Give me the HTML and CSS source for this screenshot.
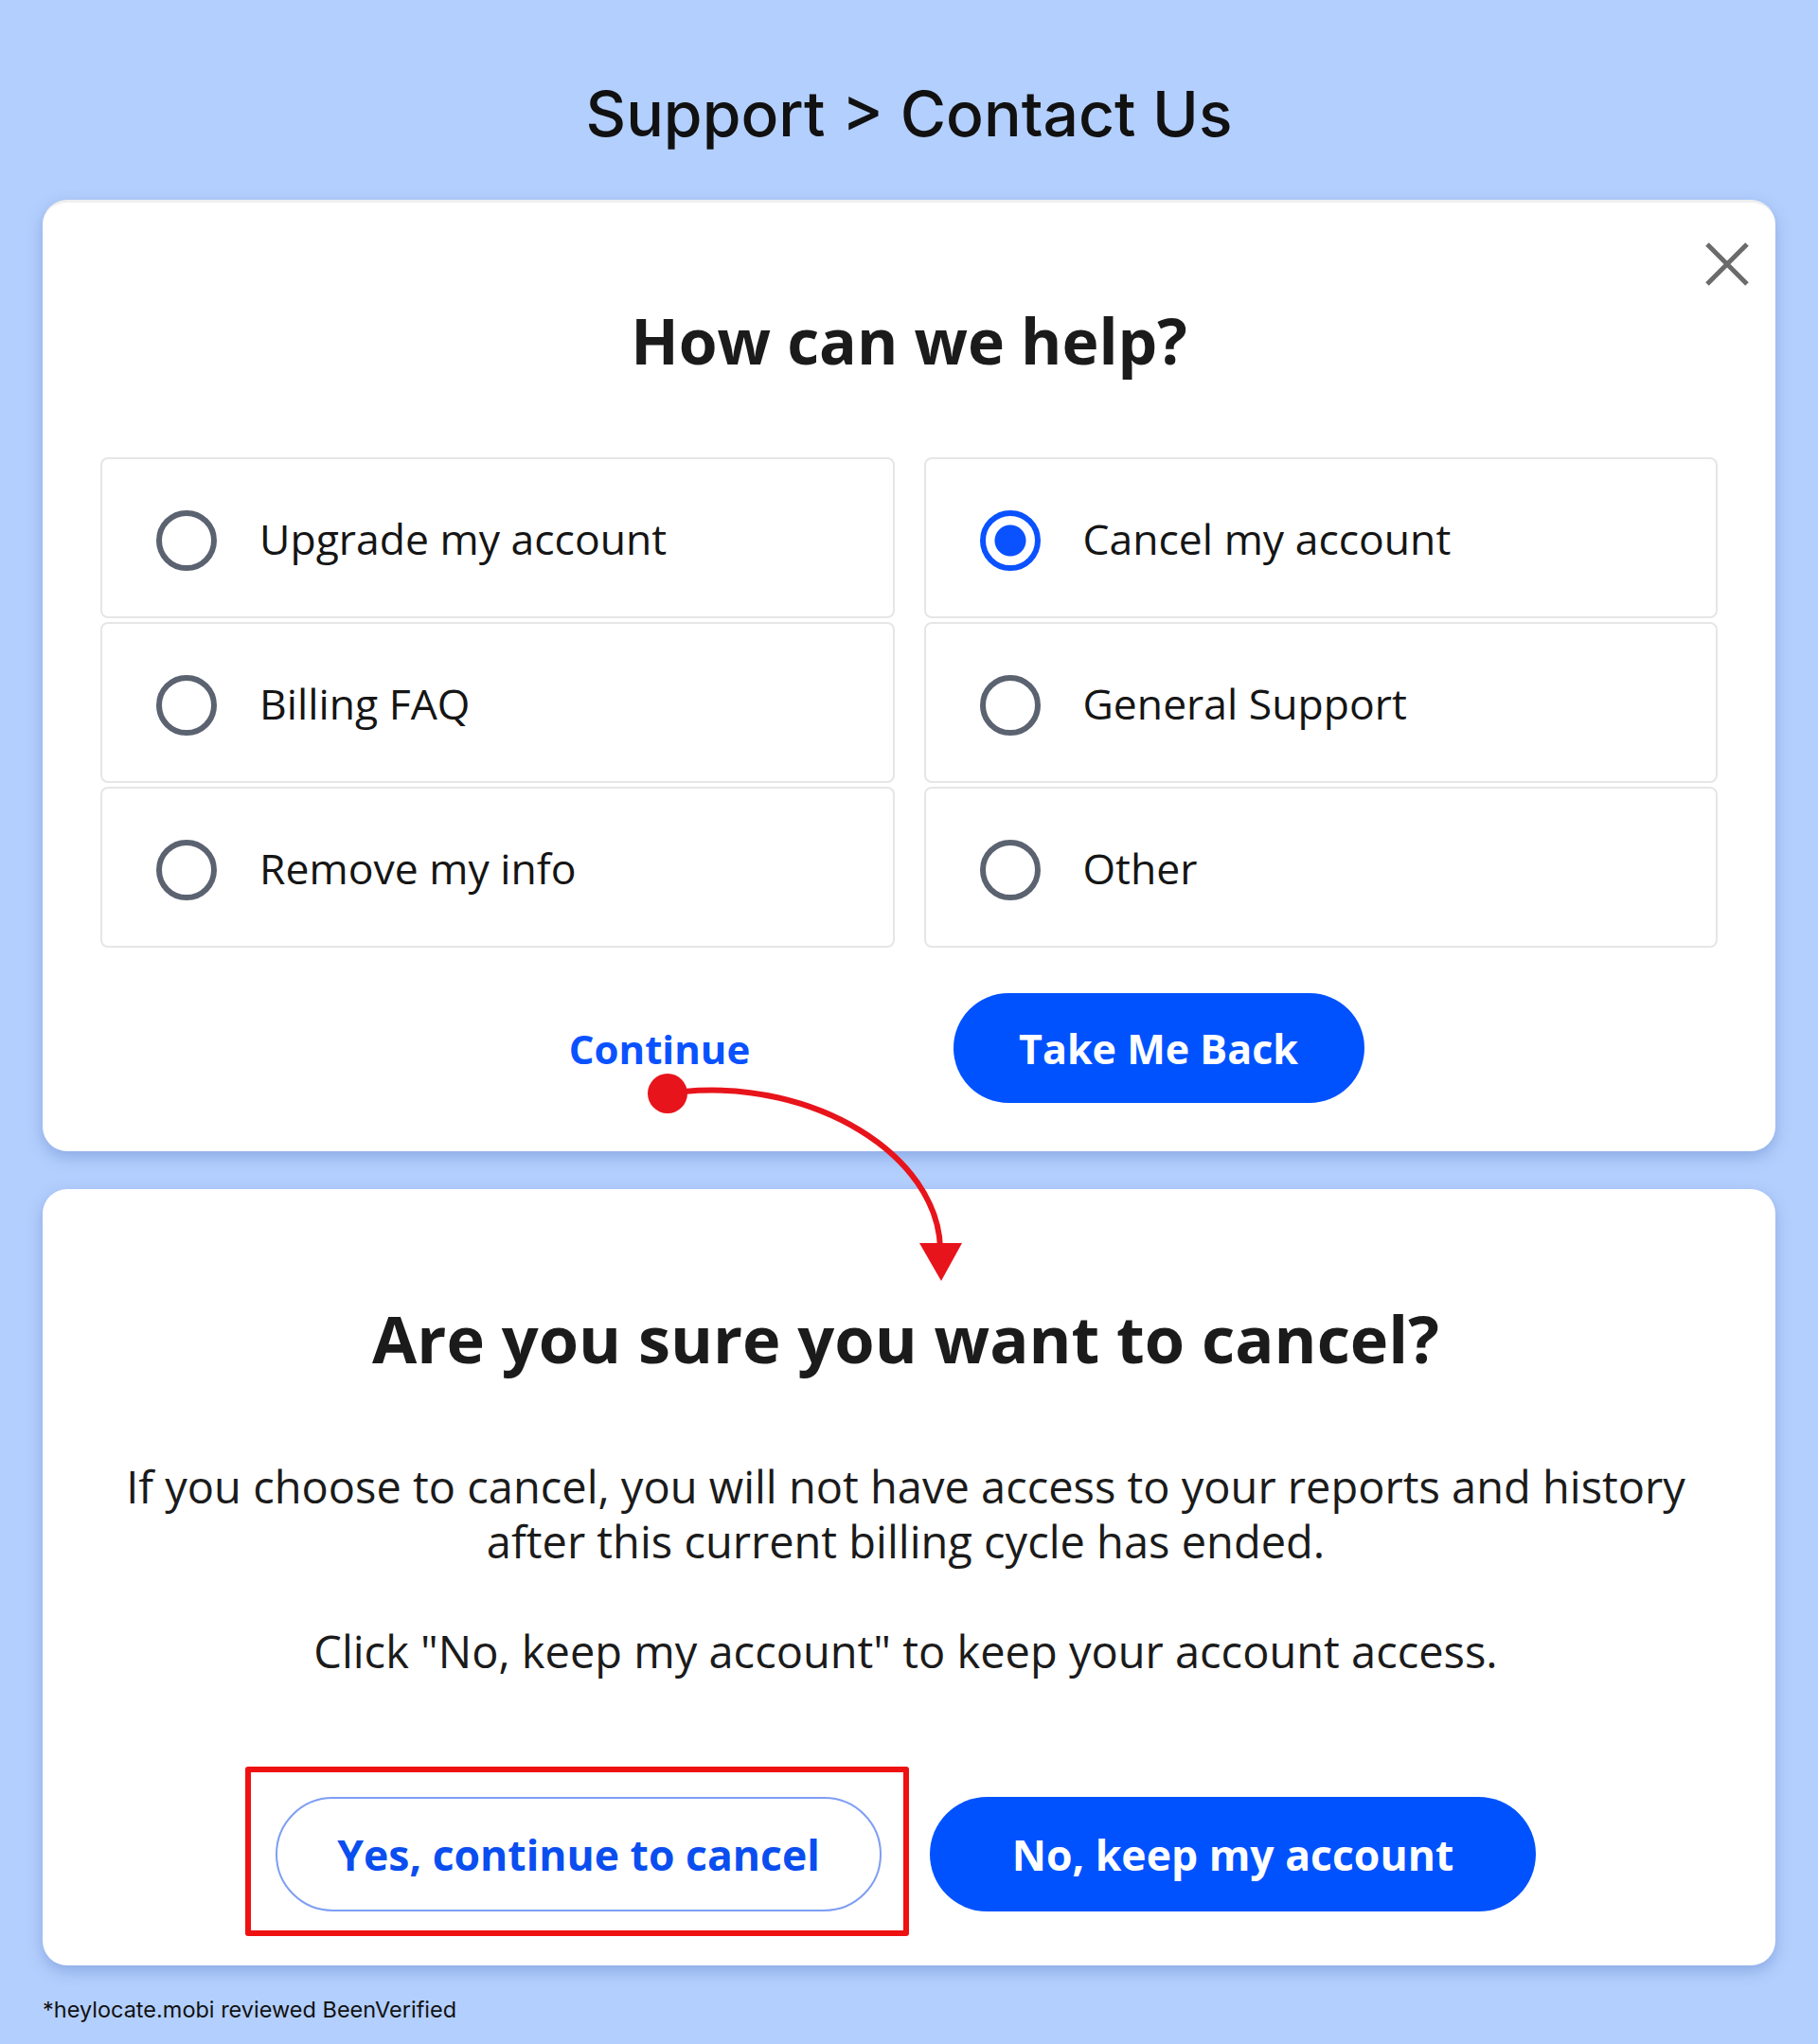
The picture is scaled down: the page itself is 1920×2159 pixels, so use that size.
FILE: index.html
```html
<!DOCTYPE html>
<html lang="en">

<head>
    <meta charset="UTF-8">
    <meta name="viewport" content="width=device-width, initial-scale=1.0">
    <title>Support &gt; Contact Us</title>
    <link rel="stylesheet" href="styles.css">
</head>

<body>
    <div class="page">
        <h1 class="crumb">Support &gt; Contact Us</h1>

        <section class="card card-help">
            <button type="button" class="close" aria-label="Close">
                <svg width="48" height="48" viewBox="0 0 48 48">
                    <path d="M3 3 L45 45 M45 3 L3 45" stroke="#6b6b6b" stroke-width="5" fill="none" />
                </svg>
            </button>
            <h2 class="help-title">How can we help?</h2>

            <div class="options">
                <label class="option"><span class="radio"></span>Upgrade my account</label>
                <label class="option"><span class="radio checked"></span>Cancel my account</label>
                <label class="option"><span class="radio"></span>Billing FAQ</label>
                <label class="option"><span class="radio"></span>General Support</label>
                <label class="option"><span class="radio"></span>Remove my info</label>
                <label class="option"><span class="radio"></span>Other</label>
            </div>

            <div class="actions">
                <button type="button" class="btn btn-link">Continue</button>
                <button type="button" class="btn btn-solid">Take Me Back</button>
            </div>
        </section>

        <section class="card card-confirm">
            <h2 class="confirm-title">Are you sure you want to cancel?</h2>
            <p class="confirm-text">If you choose to cancel, you will not have access to your reports and history<br>after this current billing cycle has ended.</p>
            <p class="confirm-text second">Click "No, keep my account" to keep your account access.</p>

            <div class="actions actions-confirm">
                <span class="marked">
                    <button type="button" class="btn btn-outline">Yes, continue to cancel</button>
                </span>
                <button type="button" class="btn btn-solid">No, keep my account</button>
            </div>
        </section>

        <p class="note">*heylocate.mobi reviewed BeenVerified</p>
    </div>

    <!-- annotation arrow from Continue down to the second dialog -->
    <svg class="arrow" width="1920" height="2159" viewBox="0 0 1920 2159">
        <circle cx="705" cy="1155" r="21" fill="#e8141b" />
        <path d="M722 1153 C860 1140 990 1220 993 1318" stroke="#e8141b" stroke-width="6" fill="none" />
        <polygon points="971,1313 1016,1313 994,1353" fill="#e8141b" />
    </svg>
</body>

</html>
```

FILE: styles.css
```css
body {
    margin: 0;
    background: #b3cffd;
    font-family: "Open Sans", Arial, sans-serif;
    color: #1b1b1b;
}

.page {
    position: relative;
    padding: 0 45px;
}

.crumb {
    margin: 0;
    padding-top: 80px;
    height: 131px;
    line-height: 80px;
    text-align: center;
    font-family: Inter, "Open Sans", sans-serif;
    font-size: 66px;
    font-weight: 500;
    color: #111;
}

.card {
    position: relative;
    background: #fff;
    border-radius: 26px;
    box-shadow: 0 6px 16px rgba(70, 100, 180, 0.35);
    box-sizing: border-box;
}

.card-help {
    height: 1005px;
    padding: 110px 61px 51px;
    border-top: 3px solid #efefef;
}

.close {
    position: absolute;
    top: 41px;
    right: 27px;
    padding: 0;
    border: none;
    background: none;
    line-height: 0;
}

.help-title {
    margin: -3px 0 85px;
    height: 77px;
    line-height: 77px;
    text-align: center;
    font-size: 66px;
    font-weight: 700;
}

.options {
    display: grid;
    grid-template-columns: 1fr 1fr;
    grid-auto-rows: 170px;
    column-gap: 31px;
    row-gap: 4px;
}

.option {
    display: flex;
    align-items: center;
    gap: 45px;
    padding-left: 57px;
    border: 2px solid #e6e6e6;
    border-radius: 8px;
    font-size: 44.5px;
    color: #151515;
}

.radio {
    width: 64px;
    height: 64px;
    margin-top: 6px;
    box-sizing: border-box;
    border: 6px solid #5b6270;
    border-radius: 50%;
    flex-shrink: 0;
}

.radio.checked {
    border-color: #0a52ff;
    background: radial-gradient(circle, #0a52ff 16px, #fff 17px);
}

.actions {
    display: flex;
    justify-content: center;
    gap: 93px;
    margin-top: 48px;
}

.btn {
    width: 434px;
    height: 116px;
    border-radius: 58px;
    border: none;
    font-family: "Open Sans", Arial, sans-serif;
    font-size: 43px;
    font-weight: 700;
    cursor: pointer;
}

.btn-link {
    background: none;
    color: #0a52ff;
    font-size: 42px;
}

.btn-solid {
    background: #0052ff;
    color: #fff;
}

.card-confirm {
    margin-top: 40px;
    height: 820px;
    padding: 115px 64px 57px 57px;
    text-align: center;
}

.confirm-title {
    margin: 0 0 84px;
    height: 86px;
    line-height: 86px;
    font-size: 68.5px;
    font-weight: 700;
}

.confirm-text {
    margin: 0;
    font-size: 47px;
    line-height: 58px;
    color: #1b1b1b;
}

.confirm-text.second {
    margin-top: 58px;
}

.actions-confirm {
    gap: 51px;
    margin-top: 125px;
}

.actions-confirm .btn {
    width: 640px;
    height: 121px;
    border-radius: 61px;
    font-size: 44.5px;
}

.btn-outline {
    background: #fff;
    border: 2px solid #7e9ef4;
    color: #0a4ef0;
}

.marked {
    position: relative;
    display: block;
}

.marked::after {
    content: "";
    position: absolute;
    top: -32px;
    left: -32px;
    right: -29px;
    bottom: -26px;
    border: 6px solid #ee1111;
    border-radius: 3px;
    pointer-events: none;
}

.note {
    margin: 32px 0 0;
    font-family: Inter, "Open Sans", sans-serif;
    font-size: 23.5px;
    line-height: 30px;
    color: #111;
}

.arrow {
    position: absolute;
    top: 0;
    left: 0;
    pointer-events: none;
}
```
